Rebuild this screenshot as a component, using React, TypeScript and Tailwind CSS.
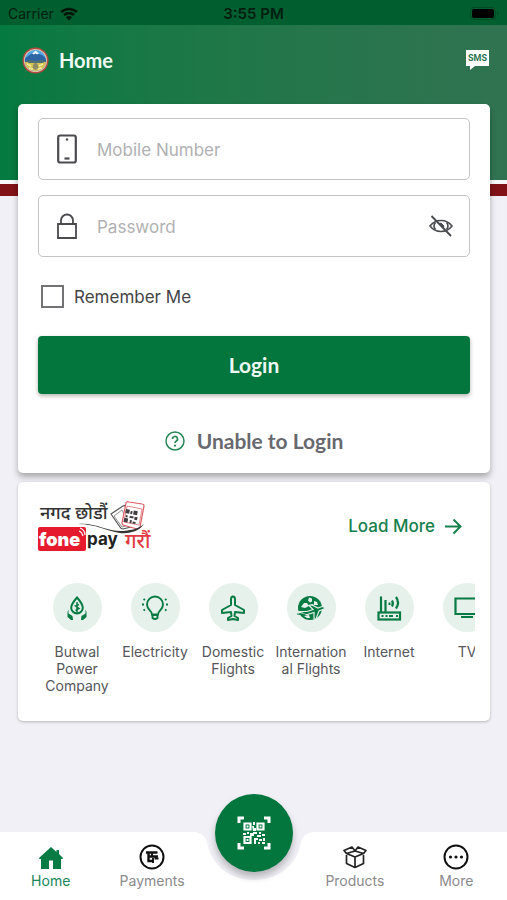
import React, { useState } from "react";
import type { ReactNode } from "react";

const INTER = "font-['Inter','Liberation_Sans',sans-serif]";

function StatusBar() {
  return (
    <div className="flex h-[25px] items-center justify-between bg-[#005e2f] px-2 pt-[2px] text-sm text-[#00200f]">
      <div className="flex flex-1 items-center gap-[6px]">
        <span>Carrier</span>
        <svg width="18" height="14" viewBox="0 0 18 14" fill="none" stroke="#00180a" strokeWidth="2.6">
          <path d="M1.2 5.2a11 11 0 0 1 15.6 0" />
          <path d="M4 8.2a7 7 0 0 1 10 0" />
          <path d="M9 13.4L5.9 10.3a4.4 4.4 0 0 1 6.2 0z" fill="#00180a" stroke="none" />
        </svg>
      </div>
      <span className="text-[15px] font-semibold">3:55 PM</span>
      <div className="flex flex-1 justify-end">
        <svg width="29" height="13" viewBox="0 0 29 13">
          <rect x="0.5" y="0.5" width="25" height="12" rx="3.5" fill="none" stroke="#004a24" />
          <rect x="2" y="2" width="22" height="9" rx="2" fill="#000" />
          <path d="M27 4.5v4a2.2 2.2 0 0 0 0-4z" fill="#004a24" />
        </svg>
      </div>
    </div>
  );
}

function Emblem() {
  return (
    <svg width="27" height="27" viewBox="0 0 27 27">
      <defs>
        <clipPath id="emblem">
          <circle cx="13.5" cy="13.5" r="10.6" />
        </clipPath>
      </defs>
      <circle cx="13.5" cy="13.5" r="13" fill="#b64a40" />
      <circle cx="13.5" cy="13.5" r="11.6" fill="#d8c4ae" />
      <g clipPath="url(#emblem)">
        <rect width="27" height="27" fill="#51a9e4" />
        <path d="M2 12l4-3 3-2 4-3 4 3 3 1 5 4v4H2z" fill="#2d65a5" />
        <path d="M10 6.5l3.5-3 3.5 3-2 1-1.5-1-1.5 1z" fill="#e9f3fb" />
        <path d="M2 15h23v11H2z" fill="#d7c552" />
        <path d="M3 14l6-1 4.5 1 5-1 6 1-4 2H7z" fill="#4d6f75" />
        <path d="M11.5 17l2-1.5 2 1.5 1 4-3 2-3-2z" fill="#8f8c68" />
        <path d="M5 17l4 2M21 17l-4 2M7 21l4 1M20 21l-4 1" stroke="#f2e9a0" strokeWidth="1.5" />
      </g>
    </svg>
  );
}

function SmsIcon() {
  return (
    <svg width="23" height="20" viewBox="0 0 23 20">
      <path d="M0 0h23v16H9l-5 4v-4H0z" fill="#fff" />
      <text
        x="11.5"
        y="11"
        textAnchor="middle"
        fontFamily="'Liberation Sans Narrow', Roboto, sans-serif"
        fontWeight="700"
        fontSize="9"
        fill="#27724b"
      >
        SMS
      </text>
    </svg>
  );
}

function PhoneIcon() {
  return (
    <svg width="20" height="30" viewBox="0 0 20 30" fill="none" stroke="#4a4b4f">
      <rect x="1.2" y="1.5" width="17.6" height="27" rx="2" strokeWidth="2.2" />
      <path d="M7.5 24.5h5" strokeWidth="2.2" />
      <circle cx="10" cy="5.5" r="1.2" fill="#4a4b4f" stroke="none" />
    </svg>
  );
}

function LockIcon() {
  return (
    <svg width="20" height="26" viewBox="0 0 20 26" fill="none" stroke="#4a4b4f" strokeWidth="1.8">
      <path d="M1 11h18v14H1z" />
      <path d="M4 11V7.5a6 6 0 0 1 12 0V11" />
    </svg>
  );
}

function EyeOffIcon() {
  return (
    <svg width="24" height="22" viewBox="0 0 24 22" fill="none" stroke="#4a4b4f" strokeWidth="1.6">
      <path d="M1 11c3-4 7-5.5 11-5.5S20 7 23 11c-3 4-7 5.5-11 5.5S4 15 1 11z" />
      <path d="M6.5 7.5c-1.7 2-1.7 5 0 7M17.5 7.5c1.7 2 1.7 5 0 7" />
      <path d="M12 8l3 3-1 2-4-4z" fill="#4a4b4f" strokeWidth="1" />
      <path d="M2.5 1l19.5 20" strokeWidth="1.9" />
    </svg>
  );
}

function HelpIcon() {
  return (
    <svg width="20" height="20" viewBox="0 0 20 20" fill="none" stroke="#2a8757" strokeWidth="1.5">
      <circle cx="10" cy="10" r="9" />
      <path d="M7.5 8a2.5 2.5 0 1 1 3.6 2.2c-.8.4-1.1.8-1.1 1.9" strokeWidth="1.7" />
      <circle cx="10" cy="14.7" r="1.1" fill="#2a8757" stroke="none" />
    </svg>
  );
}

function FonepayLogo() {
  return (
    <svg width="118" height="58" viewBox="0 0 118 58" className="overflow-visible" role="img" aria-label="Fonepay">
      <text x="2" y="19" fontFamily="'Noto Sans', 'Noto Sans Devanagari', sans-serif" fontWeight="500" fontSize="18" fill="#333">
        नगद छोडौं
      </text>
      <g fill="#fff" strokeWidth="1.2">
        <path d="M73 14l12-8q2-1 3 1l7 17q1 2-2 3l-8 2q-2 0-3-2z" stroke="#555" />
        <path d="M76 16l8-6 7 15-7 2z" stroke="#777" strokeWidth="0.8" />
        <path d="M91 2l13 2q2 0 2 2l-4 21q-1 2-3 2l-14-4q-1-1-1-2L88 3q1-2 3-1z" stroke="#dc5b62" />
        <path d="M89 6l15 3-3 16-15-3z" stroke="#df6b71" strokeWidth="0.8" />
      </g>
      <g transform="translate(88 9) rotate(11)" fill="#453f43">
        <path d="M0 0h4v4H0zM8 0h4v4H8zM0 9h4v4H0zM5 1h2v3H5zM5 6h4v2H5zM10 6h3v3h-3zM6 10h2v3H6zM9 11h3v2H9zM1 6h2v2H1z" />
      </g>
      <path d="M40 24c16-2 28 7 43 7 8 0 17-2 23-7-5 8-17 10-24 9-14-2-24-9-42-9z" fill="#333" />
      <rect x="0" y="27" width="48" height="24" rx="2" fill="#e51b2d" />
      <text x="1" y="46" fontFamily="Inter, sans-serif" fontWeight="900" fontSize="18" fill="#fff">
        fone
      </text>
      <path d="M41 31q3 1 4 5M42 28q5 2 5 7" fill="none" stroke="#fff" strokeWidth="1.2" />
      <text x="49" y="45" fontFamily="Inter, sans-serif" fontWeight="700" fontSize="17" fill="#222">
        pay
      </text>
      <text x="87" y="48" fontFamily="'Noto Sans', 'Noto Sans Devanagari', sans-serif" fontWeight="500" fontSize="20" fill="#e23a43">
        गरौं
      </text>
    </svg>
  );
}

function PowerIcon() {
  return (
    <svg width="26" height="26" viewBox="0 0 26 26" fill="none" stroke="#087a43" strokeWidth="2">
      <path d="M13 2.5c3.5 4 5.8 7 5.8 10.2a5.8 5.8 0 0 1-11.6 0C7.2 9.5 9.5 6.5 13 2.5z" />
      <path d="M13 7v12M15 9.5l-3.5 1.5 3.5 2.5-3.5 2" strokeWidth="1.5" />
      <path d="M4.5 14.5v4l4 2.5.5 4H7L3.5 22v-5zM21.5 14.5v4l-4 2.5-.5 4h2l3.5-3v-5z" fill="#087a43" stroke="none" />
    </svg>
  );
}

function BulbIcon() {
  return (
    <svg width="26" height="26" viewBox="0 0 26 26" fill="none" stroke="#087a43" strokeWidth="1.9">
      <path d="M10 19.5c0-4-5-4.5-5-10a8 8 0 0 1 16 0c0 5.5-5 6-5 10z" />
      <path d="M10.5 20h5v3q-2.5 2-5 0z" />
      <path d="M0 9.5h2M24 9.5h2M1.5 4l1.5 1M24.5 4L23 5M1.5 15.5l1.5-1M24.5 15.5l-1.5-1" />
    </svg>
  );
}

function PlaneIcon() {
  return (
    <svg width="26" height="26" viewBox="0 0 26 26" fill="none" stroke="#087a43" strokeWidth="2" strokeLinejoin="round">
      <path d="M13 1.5c-1.5 0-2 1.5-2 3V10l-9 5v3l9-1 .5 4L8 23v2l5-1 5 1v-2l-3.5-2 .5-4 9 1v-3l-9-5V4.5c0-1.500-.5-3-2-3z" />
    </svg>
  );
}

function GlobePlaneIcon() {
  return (
    <svg width="28" height="26" viewBox="0 0 28 26">
      <circle cx="13" cy="13" r="12" fill="#087a43" />
      <path d="M4 12l3-4 3 0 2 3-4 2zM12 2.5l3 1 0 3-2 1-2-2zM17 6l3 1 1 3-4 0zM12 10l4-1 2 3-4 1zM7 21l5-1 1 3-3 0z" fill="#e5f1ea" />
      <path
        d="M0 16.5l10 0 6-2-4-4 3-.5 6 3 4-1.5q3 0 2 2.5l-5 2-3 8h-2l0-6.5-7 2z"
        fill="#087a43"
        stroke="#e5f1ea"
        strokeWidth="1.2"
      />
      <path d="M0 19q6 1 11-1" stroke="#087a43" strokeWidth="1.2" fill="none" />
    </svg>
  );
}

function RouterIcon() {
  return (
    <svg width="26" height="26" viewBox="0 0 26 26" fill="none" stroke="#087a43" strokeWidth="2.2">
      <rect x="2.5" y="17.5" width="21.5" height="7" />
      <path d="M5 17V1.5M9.5 17V5" />
      <path d="M16 11.5a6 6 0 0 0 0-6M20 13.5a10 10 0 0 0 0-11.5" />
      <path d="M12.5 7.5h2v2.5h-2z" fill="#087a43" stroke="none" />
      <path d="M5.5 21h2M9.5 21h2M13 21h4M20 21h2" strokeWidth="1.9" />
    </svg>
  );
}

function TvIcon() {
  return (
    <svg width="26" height="26" viewBox="0 0 26 26" fill="none" stroke="#087a43" strokeWidth="2.2">
      <path d="M1.500 3.500h23v15.500h-23zM7 22h12" />
    </svg>
  );
}

function HomeIcon() {
  return (
    <svg width="26" height="26" viewBox="0 0 26 26" fill="#087a43">
      <path d="M13 3L1 14l.5 1H3V25h8v-8.500h4V25h8V15h1.500l.5-1-4-4V6h-2.500v2z" />
    </svg>
  );
}

function PaymentsIcon() {
  return (
    <svg width="26" height="26" viewBox="0 0 26 26" fill="none" stroke="#111">
      <circle cx="13" cy="13" r="11.5" strokeWidth="2" />
      <path d="M7 8.5h11.5M9.500 8.500v8.500h5M19 12.500h-9" strokeWidth="2.4" />
      <path d="M13 8.500v4M14 19v-5M16.500 12v2.500h3" strokeWidth="1.9" />
    </svg>
  );
}

function BoxIcon() {
  return (
    <svg width="26" height="26" viewBox="0 0 26 26" fill="none" stroke="#222" strokeWidth="1.7" strokeLinejoin="round">
      <path d="M4.5 11v8.5l8.5 4 8.5-4V11M13 13v10.500M4.500 9.500l8.500 3.500 8.500-3.500L13 7z" />
      <path d="M4.500 9.500L2 6.500 10 3l3 4 3-4 8 3.500-2.500 3" />
    </svg>
  );
}

function MoreIcon() {
  return (
    <svg width="26" height="26" viewBox="0 0 26 26">
      <circle cx="13" cy="13" r="11.5" fill="none" stroke="#111" strokeWidth="2" />
      <circle cx="7.5" cy="13" r="1.6" fill="#111" />
      <circle cx="13" cy="13" r="1.6" fill="#111" />
      <circle cx="18.5" cy="13" r="1.6" fill="#111" />
    </svg>
  );
}

function QrIcon() {
  return (
    <svg width="34" height="34" viewBox="0 0 34 34" fill="none" stroke="#fff">
      <path d="M2 7V2h5M27 2h5v5M32 27v5h-5M7 32H2v-5" strokeWidth="3" />
      <path d="M7.5 7.5h6v6h-6zM20.5 7.5h6v6h-6zM7.5 21h6v6h-6z" strokeWidth="2.2" />
      <path
        d="M9.5 9.5h2v2h-2zM22.5 9.5h2v2h-2zM9.5 23h2v2h-2zM16 6h2v3h-2zM15 10h2v2h2v3h-3zM6 17h3v2H6zM10 16h2v2h-2zM13 17h3v-1h4v2h-3v2h-4zM22 16h2v2h-2zM25 18h3v2h-3zM20 19h4v2h-4zM17 22h4v2h-2v4h-2zM22 23h3v2h-3zM26 22h2v3h-2zM21 26h2v2h-2zM25 26h3v2h-3z"
        fill="#fff"
        stroke="none"
      />
    </svg>
  );
}

const services: { label: string; icon: ReactNode }[] = [
  { label: "Butwal Power Company", icon: <PowerIcon /> },
  { label: "Electricity", icon: <BulbIcon /> },
  { label: "Domestic Flights", icon: <PlaneIcon /> },
  { label: "International Flights", icon: <GlobePlaneIcon /> },
  { label: "Internet", icon: <RouterIcon /> },
  { label: "TV", icon: <TvIcon /> },
];

function NavItem({ label, icon, active = false }: { label: string; icon: ReactNode; active?: boolean }) {
  return (
    <button type="button" className={`flex flex-1 flex-col items-center gap-px text-sm ${active ? "text-[#218657]" : "text-[#8a8a8d]"}`}>
      {icon}
      <span className="leading-5">{label}</span>
    </button>
  );
}

function BottomNav() {
  return (
    <nav className="relative mt-auto h-[68px]">
      <svg className="absolute inset-y-0 left-1/2 h-full w-[120px] -translate-x-1/2" viewBox="0 0 120 68" fill="#fff">
        <path d="M0 0c8 0 12 5 14 14 4 19 22 34 46 34s42-15 46-34c2-9 6-14 14-14v68H0z" />
      </svg>
      <div className="absolute inset-y-0 left-0 right-[calc(50%+59px)] bg-white" />
      <div className="absolute inset-y-0 left-[calc(50%+59px)] right-0 bg-white" />
      <div className="relative flex h-full pt-3">
        <NavItem label="Home" icon={<HomeIcon />} active />
        <NavItem label="Payments" icon={<PaymentsIcon />} />
        <div className="flex-1" />
        <NavItem label="Products" icon={<BoxIcon />} />
        <NavItem label="More" icon={<MoreIcon />} />
      </div>
      <button
        type="button"
        aria-label="Scan QR code"
        className="absolute -top-[38px] left-1/2 flex size-[78px] -translate-x-1/2 items-center justify-center rounded-full bg-[#03763d] shadow-[0_5px_7px_rgba(0,0,0,0.25)]"
      >
        <QrIcon />
      </button>
    </nav>
  );
}

export default function App() {
  const [remember, setRemember] = useState(false);
  const [visible, setVisible] = useState(false);

  return (
    <div className={`relative isolate flex min-h-screen flex-col overflow-hidden bg-[#f1f0f6] ${INTER}`}>
      <div className="absolute inset-x-0 top-0 -z-10">
        <div className="h-[180px] bg-linear-to-r from-[#047a40] to-[#307351]" />
        <div className="h-1 bg-[#f8f8fa]" />
        <div className="h-3 bg-[#811218]" />
      </div>

      <StatusBar />

      <header className="flex h-[79px] items-center pb-[9px] pl-[22px] pr-[18px]">
        <Emblem />
        <h1 className="ml-[10px] flex-1 font-['Lato','Open_Sans',sans-serif] text-xl font-bold text-[#f0faf4]">Home</h1>
        <button type="button" aria-label="SMS banking">
          <SmsIcon />
        </button>
      </header>

      <main className="flex flex-col gap-[9px] pl-[18px] pr-[17px]">
        <form
          className="rounded-[5px] bg-white px-5 pb-5 pt-[14px] shadow-[0_4px_6px_rgba(0,0,0,0.3)]"
          onSubmit={(event) => event.preventDefault()}
        >
          <div className="flex flex-col gap-[15px]">
            <label className="flex h-[62px] items-center rounded-[5px] border border-[#c4c4c7] pl-[18px] pr-4">
              <PhoneIcon />
              <input
                type="tel"
                aria-label="Mobile Number"
                placeholder="Mobile Number"
                className="ml-5 h-7 min-w-0 flex-1 pt-[2px] text-[17px] leading-[26px] text-[#4a4b4f] outline-none placeholder:text-[#b1b1b3]"
              />
            </label>
            <div className="flex h-[62px] items-center rounded-[5px] border border-[#c4c4c7] pl-[18px] pr-4">
              <LockIcon />
              <input
                type={visible ? "text" : "password"}
                aria-label="Password"
                placeholder="Password"
                className="ml-5 h-7 min-w-0 flex-1 pt-[2px] text-[17px] leading-[26px] text-[#4a4b4f] outline-none placeholder:text-[#b1b1b3]"
              />
              <button type="button" aria-label="Show password" onClick={() => setVisible(!visible)}>
                <EyeOffIcon />
              </button>
            </div>
          </div>

          <label className="ml-[3px] mt-[27px] flex h-6 w-fit items-center gap-[10px] text-[17px] leading-[26px] text-[#444448]">
            <input
              type="checkbox"
              checked={remember}
              onChange={() => setRemember(!remember)}
              className="size-[23px] appearance-none border-2 border-[#737375] checked:bg-[#03763d]"
            />
            <span className="pt-[2px]">Remember Me</span>
          </label>

          <button
            type="submit"
            className="mt-7 h-[58px] w-full rounded-[4px] bg-[#03763d] font-['Lato','Open_Sans',sans-serif] text-[21px] font-bold text-[#ecf8f1] shadow-[0_2px_4px_rgba(0,0,0,0.3)]"
          >
            Login
          </button>

          <button
            type="button"
            className="mx-auto mt-[35px] flex h-6 items-center gap-3 font-['Lato','Open_Sans',sans-serif] text-[21px] font-bold text-[#68696f]"
          >
            <HelpIcon />
            Unable to Login
          </button>
        </form>

        <section className="h-[239px] rounded-[5px] bg-white pb-7 pl-5 pr-[15px] pt-[18px] shadow-[0_1px_3px_rgba(0,0,0,0.25)]">
          <div className="flex items-start justify-between pr-[13px]">
            <FonepayLogo />
            <button type="button" className="mt-[13px] flex items-center gap-[10px] text-[17px] font-medium leading-[26px] text-[#16804c]">
              <span>Load More</span>
              <svg width="17" height="17" viewBox="0 0 17 17" fill="none" stroke="currentColor" strokeWidth="2">
                <path d="M0 8.5h15.5M8.5 1.5l7 7-7 7" />
              </svg>
            </button>
          </div>
          <div className="mt-[25px] flex overflow-hidden">
            {services.map((service) => (
              <button type="button" key={service.label} className="flex w-[78px] shrink-0 flex-col items-center gap-[11px] px-[1px]">
                <span className="flex size-[49px] items-center justify-center rounded-full bg-[#e5f1ea]">{service.icon}</span>
                <span className="w-full wrap-break-word text-center text-sm leading-[17px] text-[#55565b]">{service.label}</span>
              </button>
            ))}
          </div>
        </section>
      </main>

      <BottomNav />
    </div>
  );
}
